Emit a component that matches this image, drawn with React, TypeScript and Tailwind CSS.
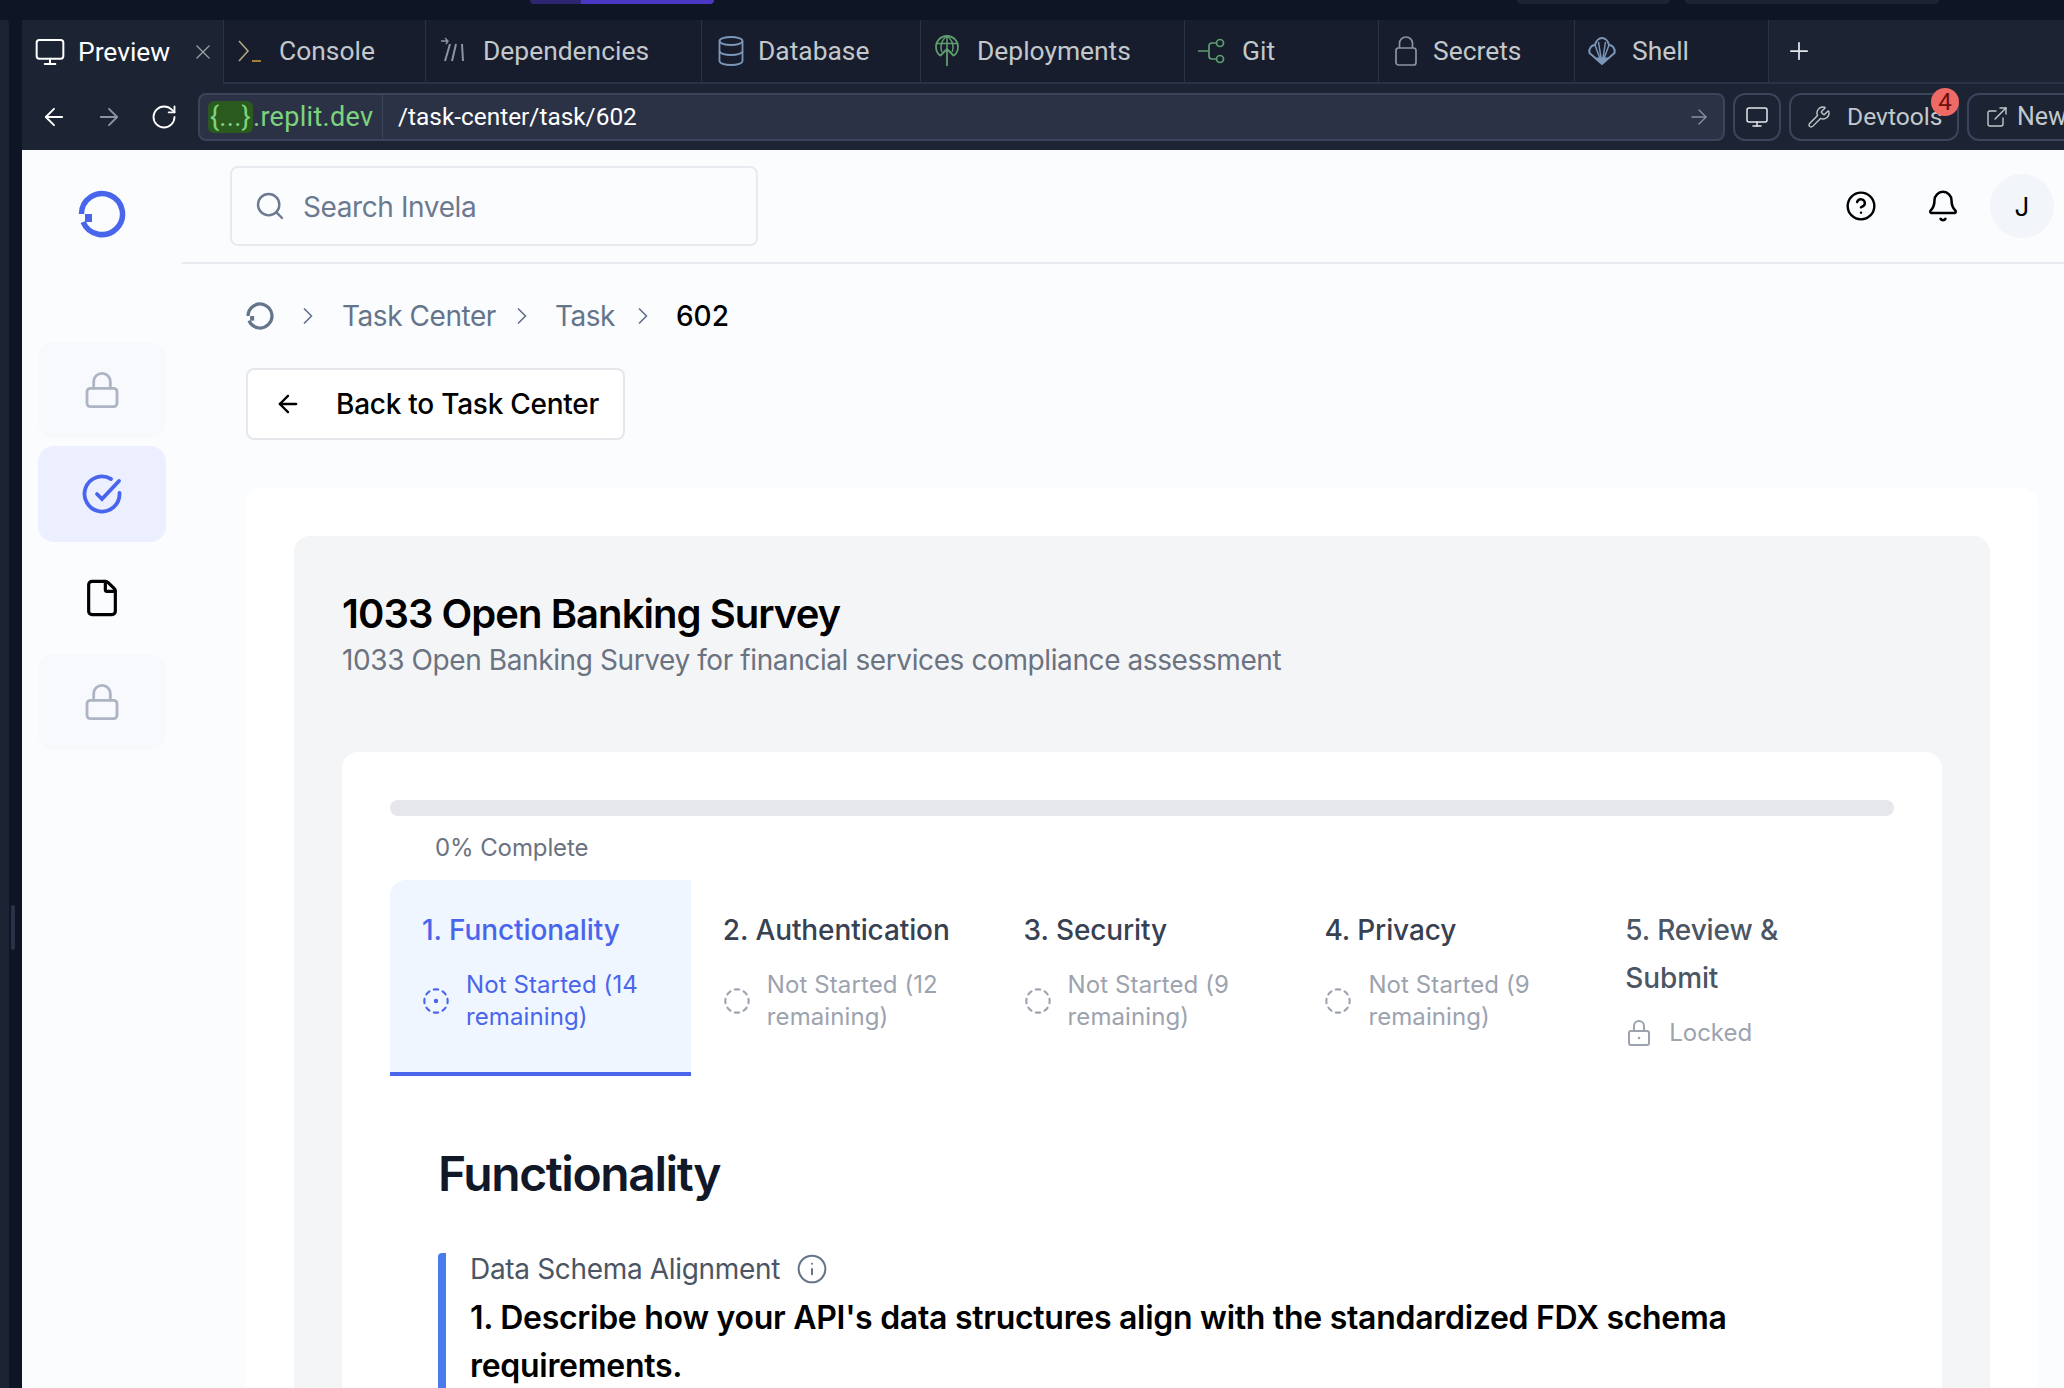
import type { ReactNode } from "react";
import {
  ArrowLeft,
  ArrowRight,
  Bell,
  ChevronRight,
  CircleDashed,
  CircleDotDashed,
  CircleHelp,
  ExternalLink,
  File,
  Info,
  Lock,
  Monitor,
  Plus,
  RotateCw,
  Search,
  Wrench,
  X,
} from "lucide-react";

function LogoMark({ className }: { className: string }) {
  return (
    <svg viewBox="0 0 48 48" fill="none" className={className}>
      <path d="M3.5 24A20.5 20.5 0 1 1 5.1 32" stroke="currentColor" strokeWidth="5.5" />
      <rect x="7" y="24" width="7" height="8" fill="currentColor" />
    </svg>
  );
}

function PromptIcon() {
  return (
    <svg viewBox="0 0 28 28" fill="none" className="h-7 w-7">
      <path d="M3 4l9 10-9 10" stroke="#b5a582" strokeWidth="1.6" />
      <path d="M16 24h9" stroke="#b58a3c" strokeWidth="1.8" />
    </svg>
  );
}

function DepsIcon() {
  return (
    <svg viewBox="0 0 28 28" fill="none" stroke="#8b93a5" strokeWidth="2" className="h-7 w-7">
      <path d="M12 7L7 24M18 7l-4 17M24 7l1 17" />
      <path d="M3 4h7M7 1l3 3-2 3" strokeWidth="1.4" />
    </svg>
  );
}

function DbIcon() {
  return (
    <svg viewBox="0 0 26 30" fill="none" stroke="#7c96b8" strokeWidth="1.8" className="h-[30px] w-[26px]">
      <ellipse cx="13" cy="5" rx="11.5" ry="4" />
      <path d="M1.5 5v20c0 2.2 5 4 11.5 4s11.5-1.8 11.5-4V5" />
      <path d="M1.5 15c0 2.2 5 4 11.5 4s11.5-1.8 11.5-4" />
    </svg>
  );
}

function DeployIcon() {
  return (
    <svg viewBox="0 0 28 32" fill="none" stroke="#5f9e6e" strokeWidth="1.8" className="h-8 w-7">
      <path d="M14 31V14M7 21l7-7 7 7" />
      <path d="M7 20.5A11 11 0 1 1 21 20.5" />
      <path d="M4 8.5h20M14 1v13M14 1c-4 3-6 7-6 11 0 2 .5 4 1 5M14 1c4 3 6 7 6 11 0 2-.5 4-1 5" strokeWidth="1.5" />
    </svg>
  );
}

function GitIcon() {
  return (
    <svg viewBox="0 0 30 30" fill="none" stroke="#5f9e6e" strokeWidth="1.7" className="h-[30px] w-[30px]">
      <circle cx="23" cy="7" r="3.5" />
      <circle cx="23" cy="23" r="3.5" />
      <path d="M1 15h11M19.5 7H15a3 3 0 0 0-3 3v10a3 3 0 0 0 3 3h4.5" />
    </svg>
  );
}

function SecretIcon() {
  return (
    <svg viewBox="0 0 22 30" fill="none" stroke="#8b93a5" strokeWidth="1.7" className="h-[30px] w-[22px]">
      <rect x="1" y="12" width="20" height="17" rx="2.5" />
      <path d="M4.5 12V7.5a6.5 6.5 0 0 1 13 0V12" />
    </svg>
  );
}

function ShellIcon() {
  return (
    <svg viewBox="0 0 30 30" fill="none" stroke="#7c96b8" strokeWidth="2" className="h-[30px] w-[30px]">
      <path d="M15 28L2.5 17C1.5 12 5 9 8 9c1-4 4-7 7-7s6 3 7 7c3 0 6.5 3 5.5 8z" />
      <path d="M15 28L8 9M15 28L11.5 6M15 28l3.5-22M15 28l7-19" strokeWidth="1.5" />
      <path d="M15 28l-6-6h12z" fill="#7c96b8" strokeWidth="1" />
    </svg>
  );
}

function CheckRing() {
  return (
    <svg viewBox="0 0 40 40" fill="none" className="h-10 w-10 text-[#4965ec]" stroke="currentColor" strokeWidth="3.8" strokeLinecap="round">
      <path d="M29 5A17.5 17.5 0 1 0 37.5 19" />
      <path d="M15 20l5 5L37 7" />
    </svg>
  );
}

function LockLarge() {
  return <Lock className="h-10 w-10 text-[#adb5c4]" strokeWidth={1.7} />;
}

function IdeTab({ icon, label, width, gap, active }: { icon: ReactNode; label: string; width: string; gap: string; active?: boolean }) {
  return (
    <div className={`flex h-full shrink-0 items-center ${width} ${gap} ${active ? "bg-[#1c2333] text-white" : "border-b-2 border-l border-[#2b3245] bg-[#171d2d] text-[#c2c8cc]"}`}>
      {icon}
      <span className="pt-px text-[26.4px] leading-none">{label}</span>
      {active && <X className="ml-auto mr-2 h-6 w-6 text-[#9da2a6]" strokeWidth={1.2} />}
    </div>
  );
}

function SideItem({ children, className }: { children: ReactNode; className: string }) {
  return <div className={`flex h-24 w-32 items-center justify-center rounded-2xl ${className}`}>{children}</div>;
}

function StepTab({ title, lines, active }: { title: string; lines: string[]; active?: boolean }) {
  return (
    <div className={`h-[196px] px-8 pt-[26px] ${active ? "rounded-tl-2xl border-b-4 border-[#4965ec] bg-[#eff6ff]" : ""}`}>
      <div className={`text-[28px] font-medium leading-[48px] tracking-[-0.1px] ${active ? "text-[#4965ec]" : "text-[#374151]"}`}>{title}</div>
      <div className={`mt-[15px] flex items-center gap-4 text-2xl leading-8 tracking-[0.1px] ${active ? "text-[#4965ec]" : "text-[#9ca3af]"}`}>
        {active ? (
          <CircleDotDashed className="h-7 w-7 shrink-0" strokeWidth={1.8} />
        ) : (
          <CircleDashed className="h-7 w-7 shrink-0" strokeWidth={1.8} />
        )}
        <span>
          {lines[0]}
          <br />
          {lines[1]}
        </span>
      </div>
    </div>
  );
}

export default function App() {
  return (
    <div className="flex h-[1388px] w-[2064px] flex-col overflow-hidden bg-[#0e1525] font-['Inter',sans-serif]">
      {/* clipped replit header */}
      <div className="flex h-5 shrink-0 items-start">
        <div className="ml-[530px] h-1 w-[51px] rounded-bl bg-[#2c2570]" />
        <div className="h-1 w-[133px] rounded-br bg-[#4a38c2]" />
        <div className="ml-[803px] h-1 w-[153px] rounded-b bg-[#1c2333]" />
        <div className="ml-[15px] h-1 w-[254px] rounded-b bg-[#1c2333]" />
      </div>

      <div className="flex min-h-0 flex-1">
        <div className="flex w-[22px] shrink-0 items-start">
          <div className="h-full w-[9px] rounded-tr bg-[#1c2333]" />
          <div className="ml-[2px] mt-[885px] h-[45px] w-1 rounded bg-[#2b3245]" />
        </div>

        <div className="flex min-w-0 flex-1 flex-col">
          {/* ide tabs */}
          <div className="flex h-[64px] shrink-0 items-stretch border-b-2 border-[#2b3245] bg-[#1c2333] font-['Roboto',sans-serif]">
            <div className="-mb-[2px] flex">
              <IdeTab active gap="gap-3 pl-3" width="w-[201px]" label="Preview" icon={<Monitor className="h-8 w-8" strokeWidth={1.5} />} />
              <IdeTab gap="gap-[15px] pl-3" width="w-[202px]" label="Console" icon={<PromptIcon />} />
              <IdeTab gap="gap-[17px] pl-3" width="w-[276px]" label="Dependencies" icon={<DepsIcon />} />
              <IdeTab gap="gap-[14px] pl-4" width="w-[219px]" label="Database" icon={<DbIcon />} />
              <IdeTab gap="gap-[16px] pl-3" width="w-[264px]" label="Deployments" icon={<DeployIcon />} />
              <IdeTab gap="gap-[15px] pl-3" width="w-[194px]" label="Git" icon={<GitIcon />} />
              <IdeTab gap="gap-[16px] pl-4" width="w-[196px]" label="Secrets" icon={<SecretIcon />} />
              <IdeTab gap="gap-[15px] pl-3" width="w-[194px]" label="Shell" icon={<ShellIcon />} />
            </div>
            <div className="flex items-center border-l border-[#2b3245] pl-4 text-[#e5e7eb]">
              <Plus className="h-7 w-7" strokeWidth={1.5} />
            </div>
          </div>

          {/* address bar */}
          <div className="flex h-[66px] shrink-0 items-center gap-2 bg-[#1c2333] font-['Roboto',sans-serif]">
            <div className="flex w-[170px] shrink-0 items-center gap-[27px] pl-[18px]">
              <ArrowLeft className="h-7 w-7 text-white" strokeWidth={1.6} />
              <ArrowRight className="h-7 w-7 text-[#8b93a5]" strokeWidth={1.6} />
              <RotateCw className="h-7 w-7 text-white" strokeWidth={1.6} />
            </div>
            <div className="-ml-[2px] flex h-12 w-[1527px] shrink-0 items-center rounded-lg border-2 border-[#3c445c] bg-[#2b3245]">
              <div className="flex h-full w-[183px] shrink-0 items-center border-r border-[#3c445c] pl-2 text-[27px] tracking-[0.3px] text-[#7dd37d]">
                <span className="flex h-8 w-[45px] items-center justify-center rounded-md bg-[#2a5a1e]">{"{...}"}</span>
                <span>.replit.dev</span>
              </div>
              <span className="pl-[15px] text-[24.4px] text-white">/task-center/task/602</span>
              <ArrowRight className="ml-auto mr-3 h-6 w-6 text-[#8b93a5]" strokeWidth={1.3} />
            </div>
            <div className="flex h-12 w-12 shrink-0 items-center justify-center rounded-xl border-2 border-[#3c445c]">
              <Monitor className="h-6 w-6 text-[#e5e7eb]" strokeWidth={1.5} />
            </div>
            <div className="relative flex h-12 w-[170px] shrink-0 items-center gap-4 rounded-xl border-2 border-[#3c445c] pl-[16px] text-[24.6px] text-[#c2c8cc]">
              <Wrench className="h-6 w-6" strokeWidth={1.4} />
              <span>Devtools</span>
              <span className="absolute -right-[2px] -top-[7px] flex h-7 w-7 items-center justify-center rounded-full bg-[#ef6a64] text-[24px] text-[#6f0f0f]">4</span>
            </div>
            <div className="flex h-12 w-[120px] shrink-0 items-center gap-2 rounded-xl border-2 border-[#3c445c] pl-[16px] text-[25px] text-[#c2c8cc]">
              <ExternalLink className="h-6 w-6 shrink-0" strokeWidth={1.4} />
              <span>New</span>
            </div>
          </div>

          {/* invela app */}
          <div className="flex min-h-0 flex-1 bg-[#fbfcfe]">
            <aside className="flex w-[160px] shrink-0 flex-col items-center pt-[40px]">
              <LogoMark className="h-12 w-12 text-[#4965ec]" />
              <div className="mt-[104px] flex flex-col gap-2">
                <SideItem className="bg-[#f8f9fc]">
                  <LockLarge />
                </SideItem>
                <SideItem className="bg-[#ebefff]">
                  <CheckRing />
                </SideItem>
                <SideItem className="">
                  <File className="h-10 w-10 text-black" strokeWidth={1.9} />
                </SideItem>
                <SideItem className="bg-[#f8f9fc]">
                  <LockLarge />
                </SideItem>
              </div>
            </aside>

            <main className="min-w-0 flex-1">
              <header className="flex h-[114px] items-center border-b-2 border-[#e7ebf1] pl-[48px] pr-[10px]">
                <div className="flex h-[80px] w-[528px] items-center gap-[17px] rounded-lg border-2 border-[#e7ebf1] pl-[22px] text-[28px] tracking-[-0.4px] text-[#6b7a90]">
                  <Search className="h-8 w-8" strokeWidth={1.8} />
                  <span className="pt-[2px]">Search Invela</span>
                </div>
                <CircleHelp className="ml-auto h-8 w-8 text-black" strokeWidth={1.8} />
                <Bell className="ml-[49px] h-[34px] w-[34px] text-black" strokeWidth={1.8} />
                <div className="ml-[30px] flex h-16 w-16 items-center justify-center rounded-full bg-[#f2f5f9] text-[26px] text-black">J</div>
              </header>

              <div className="pl-[64px] pr-[4px]">
                <nav className="flex h-[104px] items-center text-[28px] tracking-[-0.45px] text-[#64748b]">
                  <LogoMark className="h-7 w-7" />
                  <ChevronRight className="ml-5 mr-5 h-7 w-7" strokeWidth={1.5} />
                  <span>Task Center</span>
                  <ChevronRight className="ml-3 mr-[15px] h-7 w-7" strokeWidth={1.5} />
                  <span className="ml-1">Task</span>
                  <ChevronRight className="ml-[14px] mr-[19px] h-7 w-7" strokeWidth={1.5} />
                  <span className="font-medium tracking-normal text-black">602</span>
                </nav>

                <button className="flex h-[72px] w-[379px] items-center rounded-lg border-2 border-[#e5e7eb] bg-white pl-[26px] text-[28px] font-medium tracking-[-0.25px] text-black">
                  <ArrowLeft className="h-7 w-7" strokeWidth={2} />
                  <span className="ml-[34px]">Back to Task Center</span>
                </button>

                <section className="mt-[48px] h-[1000px] w-[1792px] rounded-2xl bg-white p-[48px]">
                  <div className="h-[1000px] rounded-2xl bg-[#f4f5f7] px-[48px] pt-[51px]">
                    <h1 className="text-[40px] font-semibold leading-[53px] tracking-[-0.95px] text-black">1033 Open Banking Survey</h1>
                    <p className="text-[28px] leading-10 tracking-[-0.4px] text-[#6b7280]">1033 Open Banking Survey for financial services compliance assessment</p>

                    <div className="mt-[72px] rounded-2xl bg-white p-[48px]">
                      <div className="h-4 rounded-full bg-[#e5e7eb]" />
                      <div className="pl-[45px] pt-[16px] text-2xl leading-8 tracking-[-0.1px] text-[#6b7280]">0% Complete</div>

                      <div className="mt-4 grid grid-cols-5">
                        <StepTab active title="1. Functionality" lines={["Not Started (14", "remaining)"]} />
                        <StepTab title="2. Authentication" lines={["Not Started (12", "remaining)"]} />
                        <StepTab title="3. Security" lines={["Not Started (9", "remaining)"]} />
                        <StepTab title="4. Privacy" lines={["Not Started (9", "remaining)"]} />
                        <div className="h-[196px] px-8 pt-[26px]">
                          <div className="text-[28px] font-medium leading-[48px] tracking-[-0.1px] text-[#4b5563]">5. Review & Submit</div>
                          <div className="mt-[15px] flex items-center gap-4 text-2xl leading-8 text-[#9ca3af]">
                            <svg viewBox="0 0 28 28" fill="none" stroke="currentColor" strokeWidth="2" className="h-7 w-7 shrink-0">
                              <rect x="4" y="12" width="20" height="14" rx="2" />
                              <path d="M9 12V7a5 5 0 0 1 10 0v5" />
                              <circle cx="14" cy="19" r="1.3" fill="currentColor" stroke="none" />
                            </svg>
                            <span>Locked</span>
                          </div>
                        </div>
                      </div>

                      <div className="pl-[48px] pt-[66px]">
                        <h2 className="text-[48px] font-semibold leading-[64px] tracking-[-1.4px] text-[#111827]">Functionality</h2>
                        <div className="mt-[47px] rounded-t border-l-[8px] border-[#4a7bed] pl-6">
                          <div className="flex h-8 items-center gap-4 text-[28px] tracking-[-0.33px] text-[#4b5563]">
                            <span>Data Schema Alignment</span>
                            <Info className="h-8 w-8 text-[#64748b]" strokeWidth={1.5} />
                          </div>
                          <p className="pr-[130px] pt-[9px] text-[32px] font-semibold leading-[48px] tracking-[-0.29px] text-black">
                            1. Describe how your API's data structures align with the standardized FDX schema requirements.
                          </p>
                        </div>
                      </div>
                    </div>
                  </div>
                </section>
              </div>
            </main>
          </div>
        </div>
      </div>
    </div>
  );
}
